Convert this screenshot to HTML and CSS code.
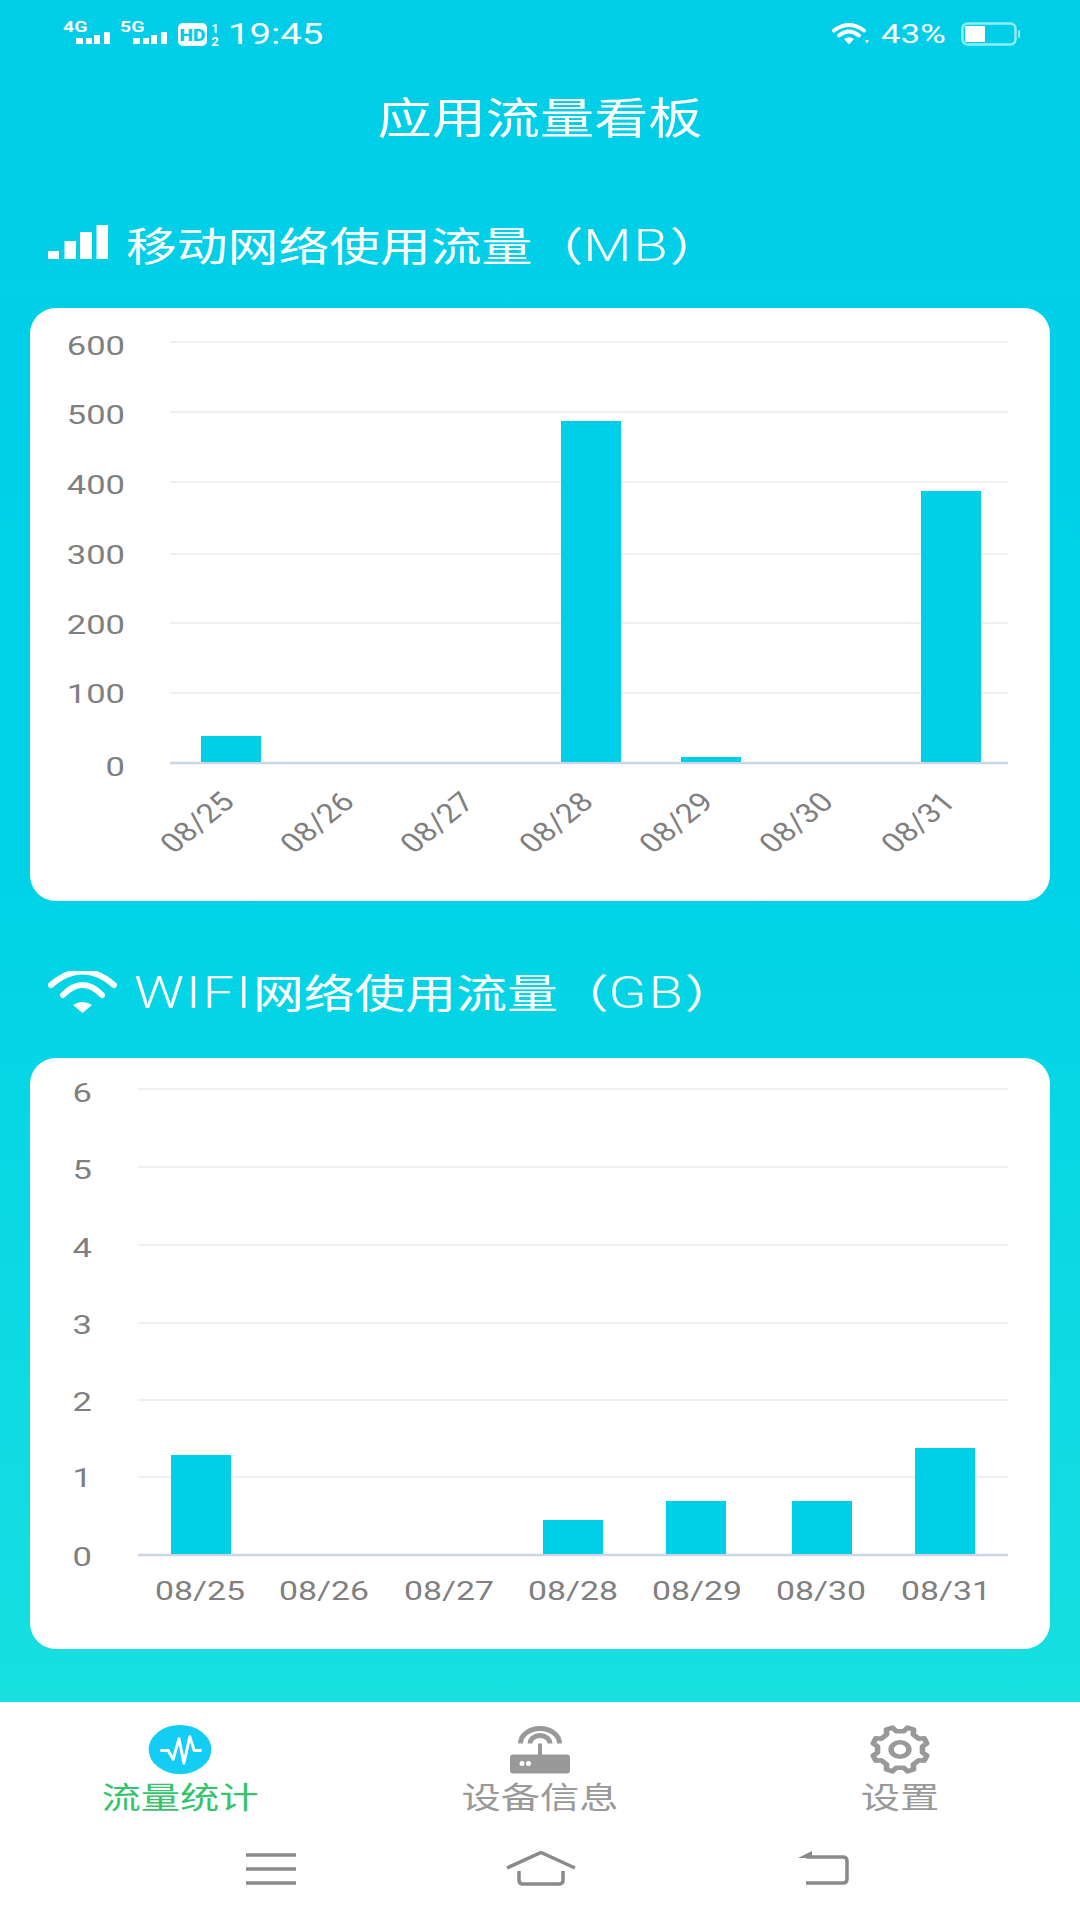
FILE: index.html
```html
<!DOCTYPE html>
<html lang="zh-CN">
<head>
<meta charset="utf-8">
<title>应用流量看板</title>
<link rel="stylesheet" href="styles.css">
</head>
<body>
<div class="screen">
  <header class="status-bar">
    <div class="status-left">
      <svg class="net-glyph" viewBox="0 -5 47 36"><text class="net-label" transform="translate(0 11) scale(1.3 1)">4G</text><rect x="13" y="17" width="7" height="6"/><rect x="23" y="17" width="6" height="6"/><rect x="31" y="14" width="6" height="9"/><rect x="41" y="11" width="6" height="12"/></svg>
      <svg class="net-glyph" viewBox="0 -5 47 36"><text class="net-label" transform="translate(0 11) scale(1.3 1)">5G</text><rect x="13" y="17" width="7" height="6"/><rect x="23" y="17" width="6" height="6"/><rect x="31" y="14" width="6" height="9"/><rect x="41" y="11" width="6" height="12"/></svg>
      <svg class="hd-glyph" viewBox="0 -3 41 31"><rect class="hd-box" x="0" y="1" width="29" height="23" rx="5"/><text class="hd-label" transform="translate(14.500 18.500) scale(1.2 1)">HD</text><text class="hd-sim" x="37" y="11">1</text><text class="hd-sim" x="37" y="24">2</text></svg>
      <span class="status-time">19:45</span>
    </div>
    <div class="status-right">
      <svg class="status-wifi" viewBox="0 0 37 24"><path class="wifi-arc" d="M2 8.500Q17 -2.500 32 8.500"/><path class="wifi-arc" d="M7 13.500Q17 5.500 27 13.500"/><path class="wifi-tip" d="M12 17Q17 13.500 22 17L17 22.500Z"/><path class="wifi-tip" d="M33 18h4l-2 3.500Z"/></svg>
      <span class="status-battery-text">43%</span>
      <svg class="battery" viewBox="0 0 59 24"><rect class="battery-shell" x="1.500" y="1.500" width="53" height="21" rx="5"/><rect class="battery-level" x="4" y="4" width="20" height="16" rx="1"/><rect class="battery-nub" x="57" y="8" width="2" height="8" rx="1"/></svg>
    </div>
  </header>

  <h1 class="page-title"><span class="wide-title">应用流量看板</span></h1>

  <section class="usage usage-mobile">
    <h2 class="usage-heading">
      <svg class="bars-icon" viewBox="0 0 60 34"><rect y="26" width="11" height="8"/><rect x="16.500" y="16" width="11.500" height="18"/><rect x="32" y="7" width="12" height="27"/><rect x="48.500" width="11.500" height="34"/></svg>
      <span class="wide-heading">移动网络使用流量（<span class="latin">MB</span>）</span>
    </h2>
    <div class="chart-card">
      <svg class="chart" viewBox="30 308 1020 593">
        <g class="grid">
          <line x1="170" x2="1008" y1="342" y2="342"/>
          <line x1="170" x2="1008" y1="412" y2="412"/>
          <line x1="170" x2="1008" y1="482" y2="482"/>
          <line x1="170" x2="1008" y1="554" y2="554"/>
          <line x1="170" x2="1008" y1="623" y2="623"/>
          <line x1="170" x2="1008" y1="693" y2="693"/>
        </g>
        <line class="axis" x1="170" x2="1008" y1="763" y2="763"/>
        <g class="bars">
          <rect x="201" y="736" width="60" height="26"/>
          <rect x="561" y="421" width="60" height="341"/>
          <rect x="681" y="757" width="60" height="5"/>
          <rect x="921" y="491" width="60" height="271"/>
        </g>
        <g class="tick-labels y-labels">
          <text transform="translate(125 355) scale(1.33 1)">600</text>
          <text transform="translate(125 424) scale(1.33 1)">500</text>
          <text transform="translate(125 494) scale(1.33 1)">400</text>
          <text transform="translate(125 564) scale(1.33 1)">300</text>
          <text transform="translate(125 634) scale(1.33 1)">200</text>
          <text transform="translate(125 703) scale(1.33 1)">100</text>
          <text transform="translate(125 776) scale(1.33 1)">0</text>
        </g>
        <g class="tick-labels x-labels">
          <text transform="translate(205 829) scale(1.22 1) rotate(-45)">08/25</text>
          <text transform="translate(325 829) scale(1.22 1) rotate(-45)">08/26</text>
          <text transform="translate(445 829) scale(1.22 1) rotate(-45)">08/27</text>
          <text transform="translate(564 829) scale(1.22 1) rotate(-45)">08/28</text>
          <text transform="translate(684 829) scale(1.22 1) rotate(-45)">08/29</text>
          <text transform="translate(804 829) scale(1.22 1) rotate(-45)">08/30</text>
          <text transform="translate(926 829) scale(1.22 1) rotate(-45)">08/31</text>
        </g>
      </svg>
    </div>
  </section>

  <section class="usage usage-wifi">
    <h2 class="usage-heading">
      <svg class="wifi-icon" viewBox="0 0 69 42"><path class="wifi-arc-lg" d="M3 14Q34.500 -13 66 14"/><path class="wifi-arc-lg" d="M15 24Q34.500 4 54 24"/><path class="wifi-tip" d="M25 34Q34.500 28 44 34L34.500 42Z"/></svg>
      <span class="wide-heading"><span class="latin">WIFI</span>网络使用流量（<span class="latin">GB</span>）</span>
    </h2>
    <div class="chart-card">
      <svg class="chart" viewBox="30 1058 1020 591">
        <g class="grid">
          <line x1="138" x2="1008" y1="1089" y2="1089"/>
          <line x1="138" x2="1008" y1="1167" y2="1167"/>
          <line x1="138" x2="1008" y1="1245" y2="1245"/>
          <line x1="138" x2="1008" y1="1323" y2="1323"/>
          <line x1="138" x2="1008" y1="1400" y2="1400"/>
          <line x1="138" x2="1008" y1="1477" y2="1477"/>
        </g>
        <line class="axis" x1="138" x2="1008" y1="1555" y2="1555"/>
        <g class="bars">
          <rect x="171" y="1455" width="60" height="99"/>
          <rect x="543" y="1520" width="60" height="34"/>
          <rect x="666" y="1501" width="60" height="53"/>
          <rect x="792" y="1501" width="60" height="53"/>
          <rect x="915" y="1448" width="60" height="106"/>
        </g>
        <g class="tick-labels y-labels">
          <text transform="translate(92 1102) scale(1.33 1)">6</text>
          <text transform="translate(92 1179) scale(1.33 1)">5</text>
          <text transform="translate(92 1257) scale(1.33 1)">4</text>
          <text transform="translate(92 1334) scale(1.33 1)">3</text>
          <text transform="translate(92 1411) scale(1.33 1)">2</text>
          <text transform="translate(92 1487) scale(1.33 1)">1</text>
          <text transform="translate(92 1566) scale(1.33 1)">0</text>
        </g>
        <g class="tick-labels cat-labels">
          <text transform="translate(200 1600) scale(1.3 1)">08/25</text>
          <text transform="translate(324 1600) scale(1.3 1)">08/26</text>
          <text transform="translate(449 1600) scale(1.3 1)">08/27</text>
          <text transform="translate(573 1600) scale(1.3 1)">08/28</text>
          <text transform="translate(697 1600) scale(1.3 1)">08/29</text>
          <text transform="translate(821 1600) scale(1.3 1)">08/30</text>
          <text transform="translate(946 1600) scale(1.3 1)">08/31</text>
        </g>
      </svg>
    </div>
  </section>

  <footer class="bottom-panel">
    <nav class="tabs">
      <div class="tab tab-active">
        <svg class="tab-icon tab-icon-round" viewBox="0 0 64 50"><ellipse class="pulse-disc" cx="32" cy="25" rx="32" ry="25"/><path class="pulse-line" d="M12 26H20L25 35L31 14L36 39L42 12L46.500 26H54"/></svg>
        <span class="wide-tab">流量统计</span>
      </div>
      <div class="tab">
        <svg class="tab-icon" viewBox="0 0 60 48"><path class="router-arc" d="M10.500 18A19.500 15 0 0 1 49.500 18"/><path class="router-arc" d="M20 18A10 8 0 0 1 40 18"/><rect class="router-solid" x="28" y="18" width="4" height="12"/><rect class="router-solid" y="29" width="60" height="19" rx="3"/><circle class="router-led" cx="12" cy="38" r="2.500"/><circle class="router-led" cx="18.500" cy="38" r="2.500"/></svg>
        <span class="wide-tab">设备信息</span>
      </div>
      <div class="tab">
        <svg class="tab-icon" viewBox="-27 -27 54 54" preserveAspectRatio="none"><path class="gear" d="M20.200 3.400L24.100 6.700L21.800 12.300L16.700 11.900L11.900 16.700L12.300 21.800L6.700 24.100L3.400 20.200L-3.400 20.200L-6.700 24.100L-12.300 21.800L-11.900 16.700L-16.700 11.900L-21.800 12.300L-24.100 6.700L-20.200 3.400L-20.200 -3.400L-24.100 -6.700L-21.800 -12.300L-16.700 -11.900L-11.900 -16.700L-12.300 -21.800L-6.700 -24.100L-3.400 -20.200L3.400 -20.200L6.700 -24.100L12.300 -21.800L11.900 -16.700L16.700 -11.900L21.800 -12.300L24.100 -6.700L20.200 -3.400Z"/><circle class="gear" r="8"/></svg>
        <span class="wide-tab">设置</span>
      </div>
    </nav>
    <div class="system-nav">
      <svg class="nav-menu" viewBox="0 0 50 32"><path class="nav-stroke" d="M0 2H50M0 16H50M0 30H50"/></svg>
      <svg class="nav-home" viewBox="0 0 70 35"><path class="nav-stroke" d="M1 17L35 1.500L69 17M13 20V29Q13 33 17 33H53Q57 33 57 29V20"/></svg>
      <svg class="nav-back" viewBox="0 0 51 35"><path class="nav-fill" d="M0 7L14 0V7Z"/><path class="nav-stroke" d="M8 6H45Q49 6 49 10V28Q49 32 45 32H8"/></svg>
    </div>
  </footer>
</div>
</body>
</html>
```

FILE: styles.css
```css
* {
  box-sizing: border-box;
}

html,
body {
  margin: 0;
  padding: 0;
}

.screen {
  width: 1080px;
  height: 1920px;
  display: flex;
  flex-direction: column;
  overflow: hidden;
  color: #fff;
  font-family: Roboto, "Noto Sans CJK SC", sans-serif;
  background: linear-gradient(180deg, #00cee8 0%, #00d2e6 45%, #18e0e0 90%);
}

/* status bar */
.status-bar {
  height: 60px;
  flex: none;
  display: flex;
  justify-content: space-between;
  align-items: flex-start;
  padding: 21px 60px 0 63px;
}

.status-left,
.status-right {
  display: flex;
  align-items: center;
  height: 26px;
}

.net-glyph {
  width: 47px;
  height: 36px;
  margin-right: 10px;
  fill: #fff;
}

.net-label {
  font: 700 15px Roboto, sans-serif;
}

.hd-glyph {
  width: 41px;
  height: 31px;
  margin-left: 1px;
  margin-right: 9px;
}

.hd-box {
  fill: #fff;
}

.hd-label {
  fill: #00cee8;
  font: 900 16px Roboto, sans-serif;
  text-anchor: middle;
}

.hd-sim {
  fill: #fff;
  font: 700 13px Roboto, sans-serif;
  text-anchor: middle;
}

.status-time {
  width: 97px;
  font-size: 29px;
  line-height: 26px;
  transform: scaleX(1.32);
  transform-origin: left center;
}

.status-wifi {
  width: 37px;
  height: 24px;
  margin-right: 12px;
}

.status-battery-text {
  width: 80px;
  font-size: 26px;
  line-height: 26px;
  transform: scaleX(1.34);
  transform-origin: left center;
}

.battery {
  width: 59px;
  height: 24px;
}

.battery-shell {
  fill: none;
  stroke: #8eeef5;
  stroke-width: 2.500;
}

.battery-level {
  fill: #fff;
}

.battery-nub {
  fill: #8eeef5;
}

.wifi-arc,
.wifi-arc-lg {
  fill: none;
  stroke: #fff;
  stroke-linecap: round;
}

.wifi-arc {
  stroke-width: 4;
}

.wifi-arc-lg {
  stroke-width: 6;
}

.wifi-tip {
  fill: #fff;
}

/* page heading */
.page-title {
  height: 60px;
  margin: 29px 0 0;
  flex: none;
  text-align: center;
  font-weight: 400;
  font-size: 43px;
  line-height: 60px;
}

.wide-title {
  display: inline-block;
  transform: scaleX(1.26);
}

/* usage sections */
.usage {
  flex: none;
}

.usage-mobile {
  margin-top: 68px;
}

.usage-wifi {
  margin-top: 61px;
}

.usage-heading {
  height: 60px;
  margin: 0;
  display: flex;
  align-items: center;
  padding-left: 48px;
  font-weight: 400;
  font-size: 40px;
  line-height: 60px;
}

.usage-mobile .usage-heading {
  margin-bottom: 31px;
}

.usage-wifi .usage-heading {
  margin-bottom: 36px;
}

.bars-icon {
  width: 60px;
  height: 34px;
  margin-right: 18px;
  margin-bottom: 10px;
  fill: #fff;
}

.wifi-icon {
  width: 69px;
  height: 42px;
  margin-right: 17px;
}

.wide-heading {
  display: inline-block;
  white-space: nowrap;
  transform: scaleX(1.27);
  transform-origin: left center;
}

.usage-wifi .wide-heading {
  padding-top: 3px;
}

.latin {
  font-size: 44px;
  font-weight: 300;
  letter-spacing: 1.500px;
}

.chart-card {
  margin: 0 30px;
  background: #fff;
  border-radius: 26px;
}

.chart {
  display: block;
  width: 1020px;
}

.usage-mobile .chart {
  height: 593px;
}

.usage-wifi .chart {
  height: 591px;
}

.grid line {
  stroke: #e8ebf0;
  stroke-width: 1.500;
}

.axis {
  stroke: #ccd6e6;
  stroke-width: 2.500;
}

.bars rect {
  fill: #00cfe8;
}

.tick-labels text {
  fill: #7f7f7f;
  font-family: Roboto, sans-serif;
}

.y-labels text {
  font-size: 26px;
  text-anchor: end;
}

.x-labels text {
  font-size: 27px;
  text-anchor: middle;
}

.cat-labels text {
  font-size: 26px;
  text-anchor: middle;
}

/* bottom navigation */
.bottom-panel {
  margin-top: auto;
  height: 218px;
  flex: none;
  background: #fff;
}

.tabs {
  display: grid;
  grid-template-columns: repeat(3, 1fr);
  padding-top: 23px;
}

.tab {
  display: flex;
  flex-direction: column;
  align-items: center;
  color: #999;
  font-size: 30px;
  line-height: 30px;
}

.tab-active {
  color: #35c46b;
}

.tab-icon {
  display: block;
  width: 60px;
  height: 49px;
  margin-bottom: 9px;
}

.tab-icon-round {
  width: 64px;
}

.wide-tab {
  display: inline-block;
  transform: scaleX(1.31);
}

.pulse-disc {
  fill: #14cdf4;
}

.pulse-line {
  fill: none;
  stroke: #fff;
  stroke-width: 3;
  stroke-linejoin: round;
}

.router-arc {
  fill: none;
  stroke: #999;
  stroke-width: 5;
}

.router-solid {
  fill: #999;
}

.router-led {
  fill: #fff;
}

.gear {
  fill: none;
  stroke: #999;
  stroke-width: 5;
  stroke-linejoin: round;
}

.system-nav {
  display: flex;
  align-items: center;
  height: 35px;
  margin-top: 38px;
  padding-left: 246px;
}

.nav-menu {
  width: 50px;
  height: 32px;
}

.nav-home {
  width: 70px;
  height: 35px;
  margin-left: 210px;
}

.nav-back {
  width: 51px;
  height: 35px;
  margin-left: 222px;
}

.nav-stroke {
  fill: none;
  stroke: #8a8a8a;
  stroke-width: 3.500;
}

.nav-fill {
  fill: #8a8a8a;
}
```
